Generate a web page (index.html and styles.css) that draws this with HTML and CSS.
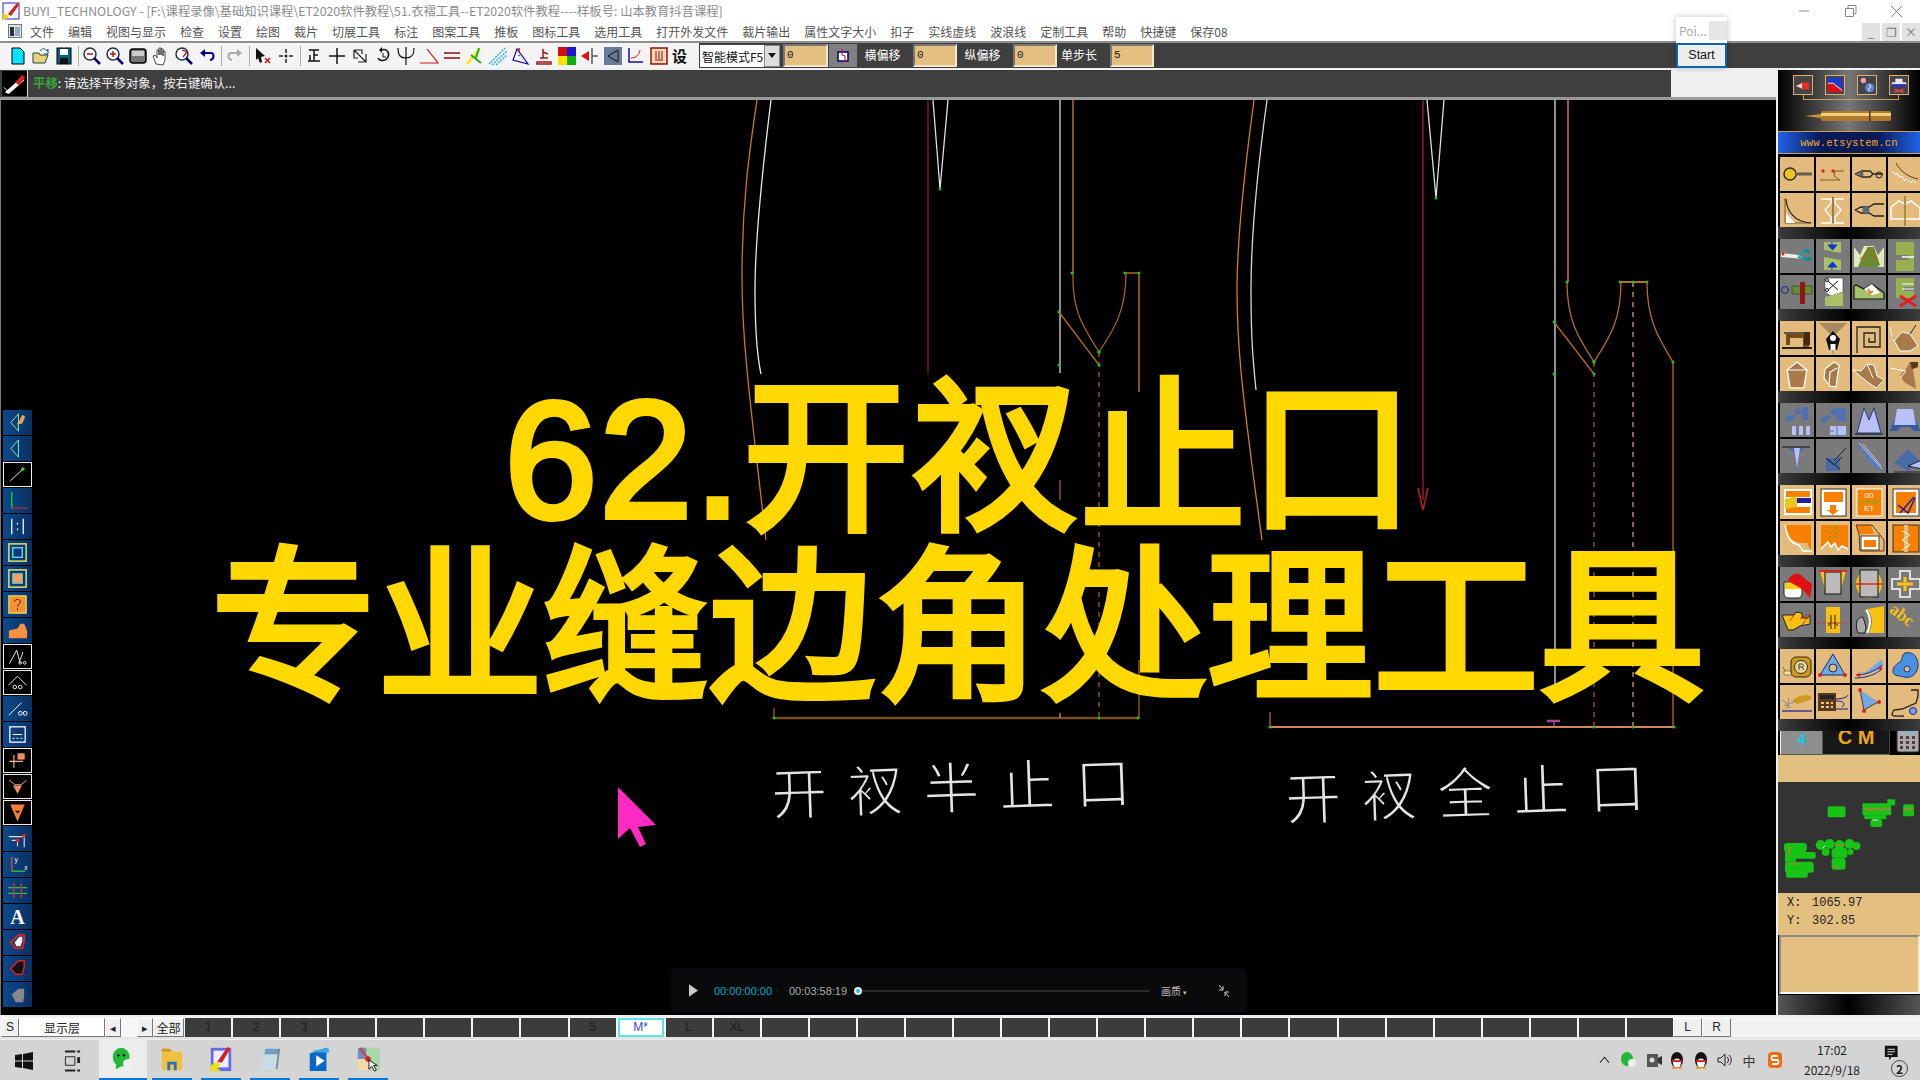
FILE: index.html
```html
<!DOCTYPE html>
<html lang="zh-CN">
<head>
    <meta charset="UTF-8">
    <title>BUYI_TECHNOLOGY - ET2020</title>
    <link rel="stylesheet" href="styles.css">
</head>
<body>
<div class="app">
    <!-- title bar -->
    <div class="titlebar">
        <svg class="app-logo" viewBox="0 0 18 18"><rect x="1" y="1" width="16" height="16" fill="#f4f4ff" stroke="#2a2ac0"/><path d="M6 12L15 1l2 2-8 11z" fill="#d02020"/><path d="M1 11l6 3-4 4H1z" fill="#f0d000"/></svg>
        <span class="title-text">BUYI_TECHNOLOGY - [F:\课程录像\基础知识课程\ET2020软件教程\51.衣褶工具--ET2020软件教程----样板号: 山本教育抖音课程]</span>
        <div class="win-btns">
            <svg viewBox="0 0 46 20"><path d="M18 10h10" stroke="#888"/></svg>
            <svg viewBox="0 0 46 20"><path d="M18.5 7.5h8v8h-8zM21 7.5v-3h8v8h-2.500" fill="none" stroke="#888"/></svg>
            <svg viewBox="0 0 46 20"><path d="M18 5l11 11M29 5L18 16" stroke="#888"/></svg>
        </div>
    </div>

    <!-- menu -->
    <div class="menubar">
        <svg class="menu-icon" viewBox="0 0 14 14"><rect x="0.5" y="0.5" width="13" height="13" fill="#dfe4e4" stroke="#777"/><rect x="2" y="3" width="4" height="9" fill="#234"/><rect x="7" y="3" width="5" height="9" fill="#9ab"/></svg>
        <span>文件</span><span>编辑</span><span>视图与显示</span><span>检查</span><span>设置</span><span>绘图</span><span>裁片</span><span>切展工具</span><span>标注</span><span>图案工具</span><span>推板</span><span>图标工具</span><span>选用工具</span><span>打开外发文件</span><span>裁片输出</span><span>属性文字大小</span><span>扣子</span><span>实线虚线</span><span>波浪线</span><span>定制工具</span><span>帮助</span><span>快捷键</span><span>保存08</span>
        <div class="mdi-btns">
            <div class="mdi-btn">_</div><div class="mdi-btn">❐</div><div class="mdi-btn">×</div>
        </div>
    </div>

    <!-- toolbar -->
    <div class="toolbar">
        <div class="tool-icons">
            <svg viewBox="0 0 20 20"><path d="M4 2h8l4 4v12H4z" fill="#00e5ff" stroke="#000"/></svg>
            <svg viewBox="0 0 20 20"><path d="M2 7h6l1 2h8l-3 8H2z" fill="#e8d27a" stroke="#245"/><path d="M9 5c2-3 5-3 7 0l1-2v5h-4" fill="none" stroke="#156"/></svg>
            <svg viewBox="0 0 20 20"><rect x="3" y="2" width="14" height="16" fill="#0a5f7a" stroke="#000"/><rect x="6" y="3" width="8" height="6" fill="#fff"/><rect x="6" y="12" width="8" height="6" fill="#111"/></svg>
            <i class="sep"></i>
            <svg viewBox="0 0 20 20"><circle cx="8" cy="8" r="6" fill="#fff" stroke="#234" stroke-width="1.5"/><path d="M5 8h6" stroke="#c01010" stroke-width="1.5"/><path d="M12 12l6 6" stroke="#007" stroke-width="2.5"/></svg>
            <svg viewBox="0 0 20 20"><circle cx="8" cy="8" r="6" fill="#fff" stroke="#234" stroke-width="1.5"/><path d="M5 8h6M8 5v6" stroke="#c01010" stroke-width="1.5"/><path d="M12 12l6 6" stroke="#007" stroke-width="2.5"/></svg>
            <svg viewBox="0 0 20 20"><rect x="2" y="3" width="16" height="14" rx="3" fill="#777" stroke="#000" stroke-width="1.5"/><rect x="4" y="5" width="12" height="5" fill="#ccc"/></svg>
            <svg viewBox="0 0 20 20"><path d="M5 18L2 10l2-1 2 3V4h2v5-7h2v7-6h2v7-5h2v9l-2 5z" fill="#fff" stroke="#222" stroke-width="0.8"/></svg>
            <svg viewBox="0 0 20 20"><circle cx="8" cy="8" r="6" fill="#fff" stroke="#234" stroke-width="1.5"/><path d="M8 4l5 2-4 5" fill="none" stroke="#c01010" stroke-width="1.3"/><path d="M12 12l6 6" stroke="#007" stroke-width="2.5"/></svg>
            <svg viewBox="0 0 20 20"><path d="M5 7h9c3 0 4 6-1 7" fill="none" stroke="#008" stroke-width="2"/><path d="M8 3L3 7l5 4z" fill="#008"/></svg>
            <i class="sep"></i>
            <svg viewBox="0 0 20 20"><path d="M15 7H6C3 7 2 13 7 14" fill="none" stroke="#aaa" stroke-width="2"/><path d="M12 3l5 4-5 4z" fill="#aaa"/></svg>
            <i class="sep"></i>
            <svg viewBox="0 0 20 20"><path d="M3 2l9 8-4 1 1 5-2 1-2-5-2 2z" fill="#111"/><path d="M12 12l5 5M17 12l-5 5" stroke="#d01010" stroke-width="1.5"/></svg>
            <svg viewBox="0 0 20 20"><path d="M10 3v4M10 13v4M3 10h4M13 10h4" stroke="#222" stroke-width="1.5"/><circle cx="10" cy="10" r="1.5" fill="#222"/></svg>
            <i class="sep"></i>
            <svg viewBox="0 0 20 20"><path d="M5 4h10M10 4v11M10 9h4M4 15h12M6 9v6" fill="none" stroke="#111" stroke-width="1.5"/></svg>
            <svg viewBox="0 0 20 20"><path d="M10 2v16M2 10h16" stroke="#111" stroke-width="1.5"/></svg>
            <svg viewBox="0 0 20 20"><path d="M4 4h8v4M8 16h8v-8M4 4l12 12M4 4v8h4" fill="none" stroke="#222" stroke-width="1.2"/></svg>
            <svg viewBox="0 0 20 20"><path d="M8 4c6-2 9 3 7 7s-8 5-10 1" fill="none" stroke="#111" stroke-width="1.5"/><path d="M9 1L6 4l3 3z" fill="#111"/><path d="M10 7v4h3" stroke="#111" fill="none"/></svg>
            <svg viewBox="0 0 20 20"><path d="M2 2c0 8 3 10 8 10s8-2 8-10M10 1v18" fill="none" stroke="#111" stroke-width="1.2"/></svg>
            <svg viewBox="0 0 20 20"><path d="M1 17h18L8 3" fill="none" stroke="#d01010" stroke-width="1.2"/></svg>
            <svg viewBox="0 0 20 20"><path d="M2 7h16M2 12h16" stroke="#8a1010" stroke-width="1.5"/></svg>
            <svg viewBox="0 0 20 20"><path d="M2 18L15 3" stroke="#ffe000" stroke-width="2.5"/><path d="M6 9l10 8M14 2l-3 10" stroke="#22aa22" stroke-width="2"/></svg>
            <svg viewBox="0 0 20 20"><path d="M1 18L17 2M4 19L19 5M8 19L19 9" stroke="#33b0e8" stroke-width="1.5" stroke-dasharray="2 1"/></svg>
            <svg viewBox="0 0 20 20"><path d="M6 3L2 14l15 4zM6 3l11 15" fill="none" stroke="#1010b0" stroke-width="1.2"/><path d="M8 2v4M8 9v1" stroke="#d01010" stroke-width="1.5"/></svg>
            <svg viewBox="0 0 20 20"><path d="M3 16h14v2H3zM9 3v9M9 6l5 2M6 12h8" fill="none" stroke="#9a1a1a" stroke-width="1.5"/></svg>
            <svg viewBox="0 0 20 20"><rect x="1" y="1" width="9" height="9" fill="#d01010"/><rect x="10" y="1" width="9" height="9" fill="#1818d0"/><rect x="1" y="10" width="9" height="9" fill="#ffe000"/><rect x="10" y="10" width="9" height="9" fill="#10b010"/></svg>
            <svg viewBox="0 0 20 20"><path d="M1 10l8-5v10z" fill="#e01010"/><path d="M12 2v16M12 10h6" stroke="#111"/></svg>
            <svg viewBox="0 0 20 20"><rect x="1" y="1" width="18" height="18" fill="#6a7a9a"/><path d="M15 4L5 10l10 6z" fill="none" stroke="#111"/></svg>
            <svg viewBox="0 0 20 20"><path d="M3 2v14h14" fill="none" stroke="#1010a0" stroke-width="1.5"/><path d="M5 12c5 0 8-3 9-8" stroke="#d01010" fill="none"/></svg>
            <svg viewBox="0 0 20 20"><rect x="2" y="2" width="16" height="16" fill="#f7d8b0" stroke="#8a1010" stroke-width="1.5"/><path d="M7 5v8M10 5v8M13 5v8M6 14h8" stroke="#8a1010"/></svg>
            <span class="tool-she">设</span>
        </div>
        <div class="tool-dark">
            <div class="combo"><span>智能模式F5</span><b class="combo-arrow"></b></div>
            <div class="field field-first">0</div>
            <div class="angle-btn"><svg viewBox="0 0 16 16"><rect x="3" y="4" width="10" height="9" fill="#fff" stroke="#006" stroke-width="1.5"/><path d="M7 1v6l3 1v6" fill="none" stroke="#d01010"/></svg></div>
            <label>横偏移</label>
            <div class="field">0</div>
            <label>纵偏移</label>
            <div class="field">0</div>
            <label class="label-step">单步长</label>
            <div class="field">5</div>
        </div>
        <div class="poi">
            <div class="poi-top"><span>Poi...</span><b></b></div>
            <div class="poi-start">Start</div>
        </div>
    </div>

    <!-- prompt -->
    <div class="statusbar">
        <svg class="status-icon" viewBox="0 0 26 26"><rect width="26" height="26" fill="#000"/><path d="M3 22L20 7l3 3-16 14z" fill="#fff"/><path d="M14 12l7-8 3 3-6 8z" fill="#e02020"/><path d="M2 17l5 5" stroke="#fff"/></svg>
        <div class="prompt"><b>平移</b>: 请选择平移对象，按右键确认...</div>
        <div class="status-rest"></div>
    </div>

    <div class="workspace">
        <!-- left tools -->
        <div class="sidebar">
            <div class="side-tool"><svg viewBox="0 0 30 24"><path d="M16 3L8 12l8 9V3z" fill="none" stroke="#8fe8b0"/><path d="M17 10l3-6 3 2-3 7-6 1z" fill="#f0a060"/></svg></div>
            <div class="side-tool"><svg viewBox="0 0 30 24"><path d="M16 3L8 12l8 9V3z" fill="none" stroke="#8fe8b0"/></svg></div>
            <div class="side-tool dark"><svg viewBox="0 0 30 24"><path d="M7 19L21 6" stroke="#fff"/><circle cx="21" cy="6" r="2" fill="#20e020"/></svg></div>
            <div class="side-tool"><svg viewBox="0 0 30 24"><path d="M9 3v17" stroke="#20c040" stroke-width="1.5"/><path d="M9 20h17" stroke="#a03030" stroke-width="1.5"/></svg></div>
            <div class="side-tool"><svg viewBox="0 0 30 24"><path d="M9 4v16M21 4v16M15 8v2M15 14v2" stroke="#fff" stroke-width="1.3"/></svg></div>
            <div class="side-tool"><svg viewBox="0 0 30 24"><rect x="6" y="3" width="18" height="18" fill="none" stroke="#e8e860" stroke-width="1.5"/><rect x="10" y="7" width="10" height="10" fill="none" stroke="#70c8f0" stroke-width="1.5"/></svg></div>
            <div class="side-tool"><svg viewBox="0 0 30 24"><rect x="6" y="3" width="18" height="18" fill="none" stroke="#e8e860" stroke-width="1.5"/><rect x="10" y="7" width="10" height="10" fill="#f0a060" stroke="#70c8f0"/></svg></div>
            <div class="side-tool"><svg viewBox="0 0 30 24"><rect x="6" y="3" width="18" height="18" fill="#f89030" stroke="#f0e050" stroke-width="1.3"/><path d="M12 9c0-3 6-3 6 0s-3 2-3 5M15 16v2" fill="none" stroke="#222"/></svg></div>
            <div class="side-tool"><svg viewBox="0 0 30 24"><path d="M6 20V12l9-2 3-5h4l3 7v8z" fill="#f89040"/></svg></div>
            <div class="side-tool dark"><svg viewBox="0 0 30 24"><path d="M6 20L14 5l4 14M18 16l3-9" fill="none" stroke="#fff"/><circle cx="18" cy="19" r="1.5" fill="none" stroke="#fff"/><circle cx="23" cy="19" r="1.5" fill="none" stroke="#fff"/></svg></div>
            <div class="side-tool dark"><svg viewBox="0 0 30 24"><path d="M5 15L15 5l10 10" fill="none" stroke="#fff"/><circle cx="12" cy="17" r="2" fill="none" stroke="#fff"/><circle cx="18" cy="17" r="2" fill="none" stroke="#fff"/></svg></div>
            <div class="side-tool"><svg viewBox="0 0 30 24"><path d="M6 19L19 6" stroke="#fff"/><circle cx="18" cy="17" r="2" fill="none" stroke="#fff"/><circle cx="23" cy="17" r="2" fill="none" stroke="#fff"/></svg></div>
            <div class="side-tool"><svg viewBox="0 0 30 24"><rect x="7" y="4" width="16" height="16" fill="none" stroke="#fff" stroke-width="1.3"/><path d="M10 12h10" stroke="#fff"/><path d="M10 16h10" stroke="#fff" stroke-dasharray="2 2"/></svg></div>
            <div class="side-tool dark"><svg viewBox="0 0 30 24"><path d="M6 13h15M11 6v14" stroke="#ffb090" stroke-width="1.3"/><rect x="15" y="4" width="8" height="7" fill="#f09060"/></svg></div>
            <div class="side-tool dark"><svg viewBox="0 0 30 24"><path d="M6 5l6 5h7l6-5" fill="none" stroke="#ffb090"/><path d="M10 11h10l-5 9z" fill="#f09060"/></svg></div>
            <div class="side-tool dark"><svg viewBox="0 0 30 24"><path d="M7 3h16l-8 19z" fill="#f88030"/><path d="M12 10h6l-3 3z" fill="#111"/></svg></div>
            <div class="side-tool"><svg viewBox="0 0 30 24"><path d="M6 10h16M9 14h6M22 10v11M15 14v6" stroke="#ddd" stroke-width="1.2"/><circle cx="22" cy="9" r="2" fill="#e02020"/><circle cx="15" cy="14" r="2" fill="#e02020"/></svg></div>
            <div class="side-tool"><svg viewBox="0 0 30 24"><path d="M9 4v15" stroke="#e04040" stroke-width="1.5"/><path d="M9 19h14" stroke="#30c040" stroke-width="1.5"/><text x="12" y="9" class="axis">y</text><text x="22" y="18" class="axis">x</text></svg></div>
            <div class="side-tool"><svg viewBox="0 0 30 24"><path d="M5 9h20M5 15h20" stroke="#30c040" stroke-width="1.5"/><path d="M11 4v16M19 4v16" stroke="#d03030" stroke-width="1.5"/></svg></div>
            <div class="side-tool"><span class="side-a">A</span></div>
            <div class="side-tool"><svg viewBox="0 0 30 24"><path d="M8 12l8-8h6v6l-2 8h-7z" fill="none" stroke="#e02020" stroke-width="2"/><path d="M12 12l5-6h3v5l-2 5h-4z" fill="#fff"/></svg></div>
            <div class="side-tool"><svg viewBox="0 0 30 24"><path d="M8 12l8-8h6v6l-2 8h-7z" fill="#111" stroke="#e02020" stroke-width="1.5"/></svg></div>
            <div class="side-tool"><svg viewBox="0 0 30 24"><path d="M9 12l7-6h6v7l-1 7h-8z" fill="#888"/></svg></div>
        </div>

        <!-- drawing area -->
        <div class="canvas">
            <svg class="drawing" viewBox="34 100 1742 915">
                <g fill="none" stroke-width="1.3">
                    <!-- half closed -->
                    <path d="M757 100C750 147 742 200 742 277C742 330 746 370 766 540" stroke="#c87820"/>
                    <path d="M771 100C762 173 755 240 755 290C755 340 758 360 761 374" stroke="#e8e8e8"/>
                    <path d="M928 100V373" stroke="#902020"/>
                    <path d="M933 100L940 189L948 100" stroke="#e0e0e0"/>
                    <path d="M1060 100V373" stroke="#b0b0b0" stroke-width="1.6"/>
                    <path d="M1073 100V273C1072 310 1082 325 1099 352C1115 328 1126 310 1126 273" stroke="#a8601c"/>
                    <path d="M1073 100V273M1139 273V392" stroke="#8a5018" stroke-width="2"/>
                    <path d="M1125 273H1139M1059 312L1099 365" stroke="#b06820"/>
                    <path d="M1099 352V716" stroke="#a06020" stroke-dasharray="5 5"/>
                    <path d="M1060 480V500M1139 660V718M774 708V718" stroke="#a06020"/>
                    <path d="M774 718H1138" stroke="#7a4a20" stroke-width="2.5"/>
                    <path d="M1060 713V718" stroke="#d880b0"/>
                    <!-- full closed -->
                    <path d="M1254 100C1245 167 1237 240 1237 290C1237 340 1240 380 1262 540" stroke="#d08020"/>
                    <path d="M1267 100C1257 173 1251 240 1251 290C1251 340 1253 360 1256 390" stroke="#d8d8d8"/>
                    <path d="M1423 100V500" stroke="#a82020"/>
                    <path d="M1418 488L1423 510L1428 488" stroke="#a82020" stroke-width="1.6"/>
                    <path d="M1427 100L1436 198L1444 100" stroke="#e0e0e0"/>
                    <path d="M1555 100V700" stroke="#c0c0c0" stroke-width="1.5"/>
                    <path d="M1568 100V282" stroke="#a05a1c" stroke-width="2"/>
                    <path d="M1567 282C1567 320 1578 337 1594 362C1610 337 1621 320 1621 282M1647 282C1647 320 1658 337 1673 362V727" stroke="#b86c20"/>
                    <path d="M1620 282H1647" stroke="#c07020" stroke-width="2"/>
                    <path d="M1554 322L1594 374" stroke="#b86c20"/>
                    <path d="M1594 362V727" stroke="#a06020" stroke-dasharray="5 5"/>
                    <path d="M1633 282V727" stroke="#e09860" stroke-dasharray="5 5"/>
                    <path d="M1270 712V727" stroke="#c06040"/>
                    <path d="M1270 727H1674" stroke="#d9835a" stroke-width="1.8"/>
                    <path d="M1554 720V727" stroke="#b050a0"/>
                    <path d="M1547 721H1560" stroke="#a04890" stroke-width="2.5"/>
                </g>
                <g fill="#18c818">
                    <circle cx="940" cy="189" r="1.5"/><circle cx="1072" cy="273" r="1.5"/><circle cx="1125" cy="273" r="1.5"/><circle cx="1139" cy="273" r="1.5"/><circle cx="1059" cy="312" r="1.5"/><circle cx="1099" cy="352" r="1.8"/><circle cx="1099" cy="365" r="1.5"/><circle cx="1059" cy="365" r="1.5"/>
                    <circle cx="1436" cy="198" r="1.5"/><circle cx="1567" cy="282" r="1.5"/><circle cx="1620" cy="282" r="1.5"/><circle cx="1633" cy="282" r="1.5"/><circle cx="1647" cy="282" r="1.5"/><circle cx="1554" cy="322" r="1.5"/><circle cx="1594" cy="362" r="1.8"/><circle cx="1594" cy="374" r="1.5"/><circle cx="1554" cy="374" r="1.5"/><circle cx="1673" cy="362" r="1.5"/>
                    <circle cx="774" cy="718" r="1.5"/><circle cx="1099" cy="718" r="1.5"/><circle cx="1138" cy="718" r="1.5"/><circle cx="1270" cy="727" r="1.5"/><circle cx="1594" cy="727" r="1.5"/><circle cx="1633" cy="727" r="1.5"/><circle cx="1674" cy="727" r="1.5"/>
                </g>
                <text class="cad-label" transform="translate(772 815) rotate(-2)">开衩半止口</text>
                <text class="cad-label" transform="translate(1286 820) rotate(-2)">开衩全止口</text>
                <polygon points="618,787 656,825 638,827 646,844 640,847 630,828 618,839" fill="#ff2bc2"/>
            </svg>

            <div class="big-title">
                <div class="big-line line-first">62.开衩止口</div>
                <div class="big-line line-second">专业缝边角处理工具</div>
            </div>

            <div class="player">
                <svg class="play-icon" viewBox="0 0 10 14"><path d="M0 0l10 7-10 7z" fill="#ccc"/></svg>
                <span class="time-now">00:00:00:00</span>
                <span class="time-all">00:03:58:19</span>
                <div class="track"><i></i></div>
                <span class="quality">画质 <small>▾</small></span>
                <svg class="shrink-icon" viewBox="0 0 14 14"><path d="M2 1l4 5M6 2v4H2M12 13L8 8M8 12V8h4" fill="none" stroke="#ccc"/></svg>
            </div>
        </div>

        <!-- right panel -->
        <div class="panel">
            <div class="panel-head">
                <div class="mini-row">
                    <div class="mini"><svg viewBox="0 0 20 20"><path d="M2 11l7-4h8v8H9z" fill="#e03020"/><path d="M2 11l7-3v6z" fill="#ddd"/></svg></div>
                    <div class="mini"><svg viewBox="0 0 20 20"><rect x="2" y="2" width="16" height="16" fill="#e01010"/><path d="M2 2h16v14L8 8H2z" fill="#1838d0"/><path d="M2 8h6l10 8" fill="none" stroke="#fff"/></svg></div>
                    <div class="mini"><svg viewBox="0 0 20 20"><circle cx="6" cy="5" r="3" fill="#f0a0a0"/><circle cx="13" cy="13" r="5" fill="#6080e0"/><path d="M12 10c3-1 3 3 0 4v3" stroke="#fff" fill="none"/></svg></div>
                    <div class="mini"><svg viewBox="0 0 20 20"><path d="M6 3h8v4h4v4H2V7h4z" fill="#e8e8ff"/><rect x="2" y="9" width="16" height="3" fill="#3030c0"/><path d="M5 15l10 3M15 15L5 18" stroke="#e04040" stroke-width="2"/></svg></div>
                </div>
                <div class="mini-wire"></div>
                <svg class="bullet" viewBox="0 0 86 12"><path d="M0 6l16-2v4z" fill="#d89030"/><rect x="16" y="1" width="70" height="10" rx="2" fill="#b07a28"/><rect x="16" y="3" width="70" height="3" fill="#f0d080"/><rect x="64" y="1" width="1.5" height="10" fill="#503010"/></svg>
            </div>
            <div class="site-band">www.etsystem.cn</div>

            <div class="tool-group">
                <div class="tile"><svg viewBox="0 0 34 34"><circle cx="10" cy="17" r="6" fill="#e8c820" stroke="#3a2a10" stroke-width="1.5"/><path d="M15 17h17" stroke="#6a5a50" stroke-width="3"/></svg></div>
                <div class="tile"><svg viewBox="0 0 34 34"><circle cx="7" cy="14" r="1.7" fill="#e02020"/><circle cx="17" cy="14" r="1.7" fill="#e02020"/><path d="M4 23H24L18 19 19 14H28" fill="none" stroke="#7a5a30"/></svg></div>
                <div class="tile"><svg viewBox="0 0 34 34"><path d="M3 17l7-3h8l3 3h10M3 17l7 3h8l3-3" fill="none" stroke="#222" stroke-width="1.3"/><circle cx="9" cy="17" r="2.5" fill="#666"/><circle cx="27" cy="18" r="3" fill="none" stroke="#222"/></svg></div>
                <div class="tile"><svg viewBox="0 0 34 34"><path d="M8 6c4 8 12 14 22 16" fill="none" stroke="#5a3a1a"/><path d="M4 14l4 4 1-2 3 5 2-2 3 5 2-2 4 4 2-3 4 4" fill="none" stroke="#fff"/></svg></div>
                <div class="tile"><svg viewBox="0 0 34 34"><path d="M5 5v25h26" fill="none" stroke="#7a5a30"/><path d="M6 30V20l9 10z" fill="#fff"/><path d="M6 6c1 12 8 23 25 24" fill="none" stroke="#222" stroke-width="1.2"/></svg></div>
                <div class="tile"><svg viewBox="0 0 34 34"><path d="M5 6h10v4l-6 7 6 7v6H5M28 6H19v4l6 7-6 7v6h9" fill="none" stroke="#fff" stroke-width="1.3"/><path d="M17 4v26" stroke="#5a3a1a"/></svg></div>
                <div class="tile"><svg viewBox="0 0 34 34"><path d="M3 17l6-3h8l5-3h10M3 17l6 3h8l5 3h10" fill="none" stroke="#222" stroke-width="1.3"/><circle cx="14" cy="17" r="3.5" fill="#5a6a7a"/></svg></div>
                <div class="tile"><svg viewBox="0 0 34 34"><path d="M3 26V14l8-6 6 3 6-3 9 7v11z" fill="none" stroke="#fff" stroke-width="1.5"/><path d="M17 3v30" stroke="#d0c020" stroke-width="1.5" stroke-dasharray="2 1"/><path d="M17 3v30" stroke="#222" stroke-width="0.6"/></svg></div>
            </div>
            <div class="tool-group">
                <div class="tile gray"><svg viewBox="0 0 34 34"><path d="M1 14l18 2 6 4-24-2z" fill="#eee"/><circle cx="3" cy="15" r="1.5" fill="#e02020"/><path d="M18 16l8-4M18 18l8 2" stroke="#20a0a0" stroke-width="2"/><ellipse cx="27" cy="12" rx="3" ry="2" fill="#1a8a9a"/><ellipse cx="28" cy="20" rx="4" ry="2" fill="#1a8a9a"/></svg></div>
                <div class="tile gray"><svg viewBox="0 0 34 34"><path d="M8 3h17v11l-17-3zM8 18l17 3v10H8z" fill="#a8c068"/><path d="M16 3v5M12 6h9l-4.500 5zM12 28h9l-4.500-5zM16 27v4" fill="#1030d0" stroke="#1030d0"/></svg></div>
                <div class="tile gray"><svg viewBox="0 0 34 34"><path d="M2 28V8l6 8 4-9h10l4 9 6-8v20z" fill="#dfe8c0"/><path d="M6 28l4-10 6-10 6 0 6 18-3 2z" fill="#6a8a30"/><path d="M8 20l6-4M26 20l-6-4M16 8v5" stroke="#e04020"/></svg></div>
                <div class="tile gray"><svg viewBox="0 0 34 34"><path d="M8 3h18v29H8V21h13v-5H8z" fill="#98b050"/><path d="M14 18h12" stroke="#fff" stroke-width="1.5"/></svg></div>
                <div class="tile gray"><svg viewBox="0 0 34 34"><circle cx="5" cy="15" r="3.5" fill="none" stroke="#1818a0"/><path d="M12 11h20v8H12z" fill="#6a8a30" stroke="#222" stroke-width="0.5"/><path d="M20 7h5v22h-5z" fill="#8a1818"/></svg></div>
                <div class="tile gray"><svg viewBox="0 0 34 34"><path d="M9 3h18v14l-12 4-6-4z" fill="#fff" stroke="#222" stroke-width="0.5"/><path d="M12 6l10 9M22 6l-10 9" stroke="#111"/><circle cx="11" cy="5" r="1.5" fill="none" stroke="#111"/><circle cx="11" cy="15" r="1.5" fill="none" stroke="#111"/><path d="M9 22l18-5v14H9z" fill="#a8c068"/></svg></div>
                <div class="tile gray"><svg viewBox="0 0 34 34"><path d="M2 11v13h30v-6L20 9 12 14 4 10z" fill="#a8c068" stroke="#111" stroke-width="1.2"/><path d="M12 14l8-5 8 9-8 2z" fill="#fff"/><path d="M16 14l2 4 3-2" stroke="#e08030" stroke-width="2" fill="none"/></svg></div>
                <div class="tile gray"><svg viewBox="0 0 34 34"><path d="M8 3h18v9H16v4h10v7H8z" fill="#98b050"/><path d="M14 9h12M14 14h12" stroke="#fff"/><path d="M12 21l16 10M28 21L12 31" stroke="#e02020" stroke-width="3"/></svg></div>
            </div>
            <div class="tool-group">
                <div class="tile"><svg viewBox="0 0 34 34"><path d="M3 13h26v14h-6V17H10v7H6v-11z" fill="#7a4a1a"/><rect x="2" y="26" width="30" height="2" fill="#222"/><rect x="24" y="11" width="6" height="13" fill="#4a2a0a"/><path d="M4 12h24" stroke="#333" stroke-width="1.5"/></svg></div>
                <div class="tile"><svg viewBox="0 0 34 34"><path d="M3 2h28L20 13h-6z" fill="#a88a60"/><path d="M17 10l7 8-3 11h-8l-3-11z" fill="#111"/><circle cx="17" cy="17" r="3" fill="#fff"/><rect x="14.5" y="23" width="5" height="6" fill="#fff"/><path d="M17 29v4" stroke="#888"/></svg></div>
                <div class="tile"><svg viewBox="0 0 34 34"><path d="M5 32V6h23v20H12V12h11v9h-6v-4" fill="none" stroke="#222" stroke-width="1.3"/></svg></div>
                <div class="tile"><svg viewBox="0 0 34 34"><path d="M2 8l4 12 8-9 8 2 8 12-8 5H12z" fill="#a87a4a"/><path d="M1 6c2 0 2 8 5 14l8-9 8 2 8 12-8 5H12L6 20" fill="none" stroke="#fff"/><path d="M22 13l6-9" stroke="#222"/></svg></div>
                <div class="tile"><svg viewBox="0 0 34 34"><path d="M8 13L17 5l9 8-3 17H11z" fill="#a87a4a"/><path d="M7 13L17 5l10 8-3 18H10zM7 13h20" fill="none" stroke="#fff" stroke-width="1.2"/></svg></div>
                <div class="tile"><svg viewBox="0 0 34 34"><path d="M9 12l9-7 5 3-3 22-6-1-6-8z" fill="#a87a4a"/><path d="M9 12l9-7 5 3-3 22-6-1-6-8zM21 11l-7 4-1 13" fill="none" stroke="#fff" stroke-width="1.2"/></svg></div>
                <div class="tile"><svg viewBox="0 0 34 34"><path d="M1 13l8 1 6-7 7 1 3 11 7 4-8 8-11-8z" fill="#a87a4a" stroke="#fff"/><path d="M15 7l6 14" stroke="#fff"/></svg></div>
                <div class="tile"><svg viewBox="0 0 34 34"><path d="M18 12l4-7h8v5l-5 2 3 20-12-7-4-7z" fill="#a87a4a"/><path d="M22 5h8v5l-6 2" fill="#5a3a1a"/><path d="M2 11l16 3-6 7" fill="none" stroke="#fff"/></svg></div>
            </div>
            <div class="tool-group">
                <div class="tile gray"><svg viewBox="0 0 34 34"><g fill="#5070b0"><path d="M4 16l8-5 3 4-8 5zM14 7l5-2 3 5-6 2z"/><rect x="22" y="4" width="6" height="13"/></g><g fill="#b8c0f8"><rect x="12" y="23" width="4" height="9"/><rect x="19" y="23" width="4" height="9"/><rect x="26" y="23" width="4" height="9"/></g></svg></div>
                <div class="tile gray"><svg viewBox="0 0 34 34"><g fill="#5070b0"><path d="M4 16l8-5 3 4-8 5zM14 7l6-2 3 5-7 3z"/><rect x="20" y="5" width="10" height="13"/></g><path d="M14 23h16v9H14z" fill="#b8c0f8"/><path d="M21 23v9M14 28h4" stroke="#5070b0"/></svg></div>
                <div class="tile gray"><svg viewBox="0 0 34 34"><path d="M5 30L12 5l5 12 5-12 7 25z" fill="#b8c0f8" stroke="#2a3a7a"/><path d="M3 31h28" stroke="#111"/></svg></div>
                <div class="tile gray"><svg viewBox="0 0 34 34"><path d="M2 28L9 10l2 2h12l2-2 7 18h-6l-4-4h-9l-4 4z" fill="#3a5aa0"/><path d="M9 6h16l3 16H6z" fill="#b8c0f8"/></svg></div>
                <div class="tile gray"><svg viewBox="0 0 34 34"><path d="M2 8h28" stroke="#111"/><path d="M8 9h16l-6 6-1 17-2-17z" fill="#4a6aa8"/><path d="M14 9l3 20 3-20z" fill="#b8c0f8"/></svg></div>
                <div class="tile gray"><svg viewBox="0 0 34 34"><path d="M10 19h14v13H10z" fill="#4a6aa8"/><path d="M10 19l14 11M30 9L18 22M10 19l8 7 8-8" fill="none" stroke="#222"/></svg></div>
                <div class="tile gray"><svg viewBox="0 0 34 34"><path d="M4 3l24 22 4 8-14-8z" fill="#5a7ab8"/><path d="M7 4l23 26M11 5l18 22" stroke="#c0c8f0"/></svg></div>
                <div class="tile gray"><svg viewBox="0 0 34 34"><path d="M6 24L20 10l12 12-12 10z" fill="#4a6aa8"/><path d="M6 33h28M20 27l14-6v9z" fill="#b8c0f8" stroke="#222"/></svg></div>
            </div>
            <div class="tool-group">
                <div class="tile"><svg viewBox="0 0 34 34"><rect x="4" y="4" width="28" height="26" fill="#fff"/><rect x="6" y="6" width="24" height="22" fill="#f88000"/><rect x="6" y="12" width="24" height="10" fill="#fff"/><path d="M5 14l12-3v11l-12 2z" fill="#e8c820"/><path d="M17 13h14v5H17z" fill="#20209a"/></svg></div>
                <div class="tile"><svg viewBox="0 0 34 34"><rect x="5" y="4" width="25" height="27" fill="#fff" stroke="#333"/><rect x="8" y="7" width="19" height="10" fill="#f88000"/><path d="M14 20h6v5h3l-6 5-6-5h3z" fill="#f88000"/></svg></div>
                <div class="tile"><svg viewBox="0 0 34 34"><rect x="5" y="4" width="25" height="27" fill="#f88000" stroke="#fff"/><text x="17" y="13" class="et-text">00</text><path d="M7 17h21" stroke="#80b020" stroke-width="1.5"/><text x="17" y="26" class="et-text">ET</text></svg></div>
                <div class="tile"><svg viewBox="0 0 34 34"><rect x="5" y="4" width="26" height="27" fill="#fff" stroke="#333"/><rect x="8" y="7" width="20" height="21" fill="#f88000"/><path d="M10 20l10 8 7-15M12 28l14-16" fill="none" stroke="#20209a" stroke-width="1.5"/></svg></div>
                <div class="tile"><svg viewBox="0 0 34 34"><path d="M6 4c2 10 4 16 14 18h7l4 8V4z" fill="#f88000"/><path d="M5 4c2 12 5 18 14 20l4 6h9" fill="none" stroke="#fff" stroke-width="1.5"/></svg></div>
                <div class="tile"><svg viewBox="0 0 34 34"><path d="M5 4h27v23l-6-3-4 4-3-7-4 4-3-5-7 7z" fill="#f88000"/><path d="M14 5v14M20 5v14" stroke="#80a020" stroke-dasharray="3 2" stroke-width="1.5"/><path d="M5 28l7-7 3 5 4-4 3 7 4-4 6 3" fill="none" stroke="#fff" stroke-width="1.5"/></svg></div>
                <div class="tile"><svg viewBox="0 0 34 34"><path d="M4 4h15l3 9H7z" fill="#f88000"/><path d="M7 13l-3-9h16l12 15v11H8z" fill="none" stroke="#5a3a1a"/><rect x="9" y="15" width="18" height="14" fill="#fff" stroke="#5a3a1a"/><rect x="12" y="19" width="12" height="7" fill="#f88000"/></svg></div>
                <div class="tile"><svg viewBox="0 0 34 34"><rect x="5" y="4" width="26" height="27" fill="#f88000" stroke="#333"/><path d="M16 4h4v27h-4z" fill="#e3bc7d"/><path d="M14 10l8 4-8 5 8 5-8 5" fill="none" stroke="#fff"/></svg></div>
            </div>
            <div class="tool-group">
                <div class="tile gray"><svg viewBox="0 0 34 34"><path d="M4 15h18v12c0 2-2 4-4 4H8c-2 0-4-2-4-4z" fill="#fff" stroke="#222"/><path d="M5 16h16v6H5z" fill="#f8d010"/><path d="M8 14c2-8 12-10 16-3l8 6-2 14-8-9z" fill="#e01010"/></svg></div>
                <div class="tile gray"><svg viewBox="0 0 34 34"><path d="M4 4l6 22h14l6-22z" fill="#f8c010"/><rect x="9" y="5" width="16" height="22" fill="#bbb" stroke="#111"/><path d="M3 4h28" stroke="#e01010" stroke-width="1.5"/></svg></div>
                <div class="tile gray"><svg viewBox="0 0 34 34"><ellipse cx="17" cy="17" rx="13" ry="14" fill="#f8c010"/><rect x="8" y="3" width="18" height="27" fill="#bbb" stroke="#111"/><path d="M4 17h27" stroke="#e01010" stroke-width="1.3"/></svg></div>
                <div class="tile gray"><svg viewBox="0 0 34 34"><path d="M12 4h10v8h10v10H22v8H12V22H4V12h8z" fill="none" stroke="#fff" stroke-width="1.5"/><path d="M17 10v14M9 17h16" stroke="#f8c010" stroke-width="3"/></svg></div>
                <div class="tile gray"><svg viewBox="0 0 34 34"><path d="M2 12h12l2-3 6 1v5h6l2-3v9l-10 2-7 4H8z" fill="#f8c010" stroke="#222"/><path d="M20 16l10-6M22 22l7-9M10 18l4-6" stroke="#d03030"/></svg></div>
                <div class="tile gray"><svg viewBox="0 0 34 34"><rect x="10" y="4" width="14" height="26" fill="#f8c010"/><path d="M1 20h32" stroke="#d03030" stroke-dasharray="3 2"/><path d="M15 12v14M19 12v14M15 19l-3 4M19 19l3 4" stroke="#222"/></svg></div>
                <div class="tile gray"><svg viewBox="0 0 34 34"><path d="M15 6c12-2 17-3 17-3v27H17c4-8 4-18-2-24z" fill="#f8c010"/><path d="M14 7c5 6 5 16 1 23" stroke="#fff" stroke-width="2" fill="none"/><path d="M5 18c1-3 4-4 6-4l3 10-1 6H6c-2-4-2-8-1-12z" fill="#aaa" stroke="#222"/></svg></div>
                <div class="tile gray"><span class="abc">abc</span></div>
            </div>
            <div class="tool-group">
                <div class="tile"><svg viewBox="0 0 34 34"><path d="M3 18l3 6h12" fill="none" stroke="#8a6a20"/><path d="M4 22h16v4H4z" fill="#f0e0a0" stroke="#333" stroke-width="0.5"/><rect x="11" y="8" width="20" height="20" rx="5" fill="#c89820" stroke="#3a2a10"/><circle cx="21" cy="18" r="6.5" fill="#e8d8a0" stroke="#3a2a10"/><path d="M19 21v-6h3c2 0 2 3 0 3h-3M22 18l2 3" fill="none" stroke="#222" stroke-width="0.8"/></svg></div>
                <div class="tile"><svg viewBox="0 0 34 34"><path d="M4 26L17 5l12 21z" fill="#70a8e8" stroke="#1a2a5a"/><circle cx="17" cy="19" r="4" fill="#e3bc7d" stroke="#1a2a5a"/><circle cx="4" cy="26" r="2" fill="#e02020"/><circle cx="29" cy="26" r="2" fill="#e02020"/></svg></div>
                <div class="tile"><svg viewBox="0 0 34 34"><path d="M5 24l9-1 16-13 1 9-16 6z" fill="#70a8e8"/><path d="M4 26c9 0 18-3 26-10M3 29c10 0 20-3 27-9" fill="none" stroke="#1a2a8a"/><circle cx="7" cy="26" r="1.8" fill="#e02020"/><circle cx="28" cy="19" r="1.8" fill="#e02020"/></svg></div>
                <div class="tile"><svg viewBox="0 0 34 34"><path d="M17 4c8-2 13 4 13 12s-6 14-14 12-11-1-11-6 4-7 7-9 1-7 5-9z" fill="#4a90e0" stroke="#1a3a7a"/><circle cx="19" cy="20" r="3" fill="#e3bc7d" stroke="#1a3a7a"/></svg></div>
                <div class="tile"><svg viewBox="0 0 34 34"><path d="M12 15l8-4c4-1 10-1 12 1l-2 3-13 4z" fill="#d09820"/><path d="M4 21l12-5M3 15l8 8M9 13l-2 11" stroke="#888"/><path d="M2 26h30" stroke="#1a1aa0" stroke-width="1.2"/></svg></div>
                <div class="tile"><svg viewBox="0 0 34 34"><rect x="2" y="8" width="18" height="18" fill="#5a3a1a"/><rect x="4" y="10" width="14" height="4" fill="#222"/><path d="M5 17h3v2H5zM10 17h3v2h-3zM15 17h2v2h-2zM5 21h3v2H5zM10 21h3v2h-3zM15 21h2v2h-2z" fill="#e8c880"/><path d="M20 14c6 0 12-2 12-4M20 16c8 0 10 3 6 6M20 24h12" fill="none" stroke="#1a1aa0"/></svg></div>
                <div class="tile"><svg viewBox="0 0 34 34"><path d="M8 5l4 20 14-8z" fill="#70a8e8"/><path d="M8 5l4 20 14-8" fill="none" stroke="#5a3a1a"/><circle cx="8" cy="5" r="2" fill="#e02020"/><circle cx="12" cy="26" r="2" fill="#e02020"/><circle cx="27" cy="17" r="2" fill="#e02020"/></svg></div>
                <div class="tile"><svg viewBox="0 0 34 34"><path d="M23 5h7v6l-2 7-14 6-8 1-2 4c0 3 4 2 12 2" fill="none" stroke="#222" stroke-width="1.3"/><circle cx="25" cy="26" r="3.5" fill="#70a8e8" stroke="#1a1aa0"/></svg></div>
            </div>

            <div class="unit-row">
                <div class="unit-num">4</div>
                <div class="unit-cm">C M</div>
                <svg class="unit-calc" viewBox="0 0 24 30"><rect x="1" y="1" width="22" height="28" rx="2" fill="#aaa" stroke="#333"/><rect x="3" y="3" width="18" height="7" fill="#8ab0d8"/><path d="M4 13h3v3H4zM10 13h3v3h-3zM16 13h3v3h-3zM4 18h3v3H4zM10 18h3v3h-3zM16 18h3v3h-3zM4 23h3v3H4zM10 23h3v3h-3zM16 23h3v3h-3z" fill="#5a3a3a"/></svg>
            </div>
            <div class="tan-strip"></div>
            <svg class="thumb" viewBox="0 0 143 111">
                <g fill="#16c416">
                    <rect x="50" y="24" width="18" height="11" rx="2"/>
                    <rect x="85" y="21" width="29" height="12" rx="1"/><rect x="110" y="17" width="8" height="6"/><rect x="87" y="33" width="22" height="4"/><rect x="93" y="37" width="12" height="8" rx="2"/>
                    <rect x="126" y="22" width="11" height="12" rx="2"/>
                    <rect x="6" y="61" width="23" height="9" rx="3"/><rect x="7" y="70" width="11" height="10"/><rect x="14" y="70" width="24" height="7" rx="2"/><rect x="7" y="80" width="29" height="11" rx="3"/><rect x="8" y="90" width="22" height="6" rx="2"/>
                    <circle cx="43" cy="63" r="5"/><circle cx="52" cy="62" r="5"/><circle cx="48" cy="70" r="4"/><circle cx="62" cy="63" r="5"/><circle cx="72" cy="62" r="5"/><circle cx="79" cy="64" r="4"/><circle cx="73" cy="70" r="3"/>
                    <rect x="54" y="66" width="16" height="10" rx="3"/><rect x="54" y="76" width="14" height="12" rx="3"/>
                </g>
                <path d="M87 27h26M127 27h9" stroke="#b08030" stroke-width="3" stroke-dasharray="2 1"/>
                <path d="M11 64v10M12 82h8M58 63h8M56 85h5" stroke="#b08030" stroke-width="1.5"/>
                <path d="M95 38h6M45 66l3 -2" stroke="#eee"/>
            </svg>
            <div class="coords">
                <div><span>X:</span>1065.97</div>
                <div><span>Y:</span>302.85</div>
            </div>
            <div class="tan-box"></div>
            <div class="panel-foot"></div>
        </div>
    </div>

    <!-- layers -->
    <div class="layerbar">
        <div class="lbtn lbtn-s">S</div>
        <div class="lbtn lbtn-layer">显示层</div>
        <div class="lbtn lbtn-arrow">◂</div>
        <div class="lbtn-slider"></div>
        <div class="lbtn lbtn-arrow">▸</div>
        <div class="lbtn lbtn-all">全部</div>
        <div class="cells">
            <div class="cell">1</div><div class="cell">2</div><div class="cell">3</div><div class="cell"></div><div class="cell"></div><div class="cell"></div><div class="cell"></div><div class="cell"></div><div class="cell">S</div><div class="cell on">M*</div><div class="cell">L</div><div class="cell">XL</div><div class="cell"></div><div class="cell"></div><div class="cell"></div><div class="cell"></div><div class="cell"></div><div class="cell"></div><div class="cell"></div><div class="cell"></div><div class="cell"></div><div class="cell"></div><div class="cell"></div><div class="cell"></div><div class="cell"></div><div class="cell"></div><div class="cell"></div><div class="cell"></div><div class="cell"></div><div class="cell"></div><div class="cell"></div>
        </div>
        <div class="lbtn lbtn-lr">L</div>
        <div class="lbtn lbtn-lr">R</div>
    </div>

    <!-- windows taskbar -->
    <div class="taskbar">
        <svg class="win-logo" viewBox="0 0 18 18"><path d="M0 3l7-1v6.5H0zM8 2l10-2v8.5H8zM0 9.5h7V16l-7-1zM8 9.5h10V18L8 16z" fill="#111"/></svg>
        <svg class="task-view" viewBox="0 0 18 24"><path d="M1 1h11v2H1zM1 21h11v2H1zM14 1h3v2h-3zM14 8h3v6h-3zM14 21h3v2h-3z" fill="#222"/><path d="M1.5 7.5h10v9h-10z" fill="none" stroke="#222"/></svg>
        <div class="task-item active"><svg viewBox="0 0 28 28"><ellipse cx="12" cy="12" rx="9" ry="10" fill="#22b838"/><path d="M7 19l-1 6 6-3z" fill="#22b838"/><ellipse cx="20" cy="19" rx="6" ry="5" fill="#eee"/><circle cx="9" cy="10" r="1.3" fill="#111"/><circle cx="15" cy="10" r="1.3" fill="#111"/></svg></div>
        <div class="task-item"><svg viewBox="0 0 28 28"><path d="M3 3h9l2 3h11v20H3z" fill="#f0c040"/><path d="M3 3h9l2 3H3z" fill="#d09a20"/><path d="M9 26v-9h10v9h-3v-6h-4v6z" fill="#2a70c0"/></svg></div>
        <div class="task-item"><svg viewBox="0 0 28 28"><rect x="3" y="2" width="22" height="25" fill="#6a6ae8"/><rect x="6" y="5" width="16" height="18" fill="#eef"/><path d="M10 17L21 1l3 2-9 15z" fill="#d02020"/><path d="M3 21l6-4 4 3-3 4 4 3H3z" fill="#f0e000"/></svg></div>
        <div class="task-item"><svg viewBox="0 0 28 28"><path d="M9 3h15l-3 22H4z" fill="#c8dce8"/><path d="M9 3h15l-1 6H8z" fill="#6aa0c8"/><path d="M21 25l3-22" stroke="#888" stroke-width="2"/></svg></div>
        <div class="task-item"><svg viewBox="0 0 28 28"><path d="M4 8l18-6v25H4z" fill="#0a68c8"/><path d="M8 5l16-3 1 5H8z" fill="#38a8e8"/><path d="M11 10l9 6-9 6z" fill="#fff"/></svg></div>
        <div class="task-item"><svg viewBox="0 0 28 28"><rect x="3" y="2" width="24" height="24" rx="3" fill="#a8d8a8"/><path d="M3 5c0-2 1-3 3-3h6v12H3z" fill="#7888c0"/><path d="M3 14h12v12H6c-2 0-3-1-3-3z" fill="#f4d8a8"/><path d="M5 2l10 12" stroke="#d04040" stroke-width="2"/><circle cx="14" cy="14" r="3" fill="#d82020"/><path d="M15 15v10l3-3 3 5 2-1-3-5h4z" fill="#fff" stroke="#111"/></svg></div>

        <div class="tray">
            <svg class="tray-up" viewBox="0 0 12 8"><path d="M1 7l5-6 5 6" fill="none" stroke="#222" stroke-width="1.2"/></svg>
            <svg class="tray-icon" viewBox="0 0 18 18"><ellipse cx="7" cy="8" rx="6" ry="7" fill="#22b838"/><ellipse cx="12" cy="12" rx="4" ry="4" fill="#eee"/></svg>
            <svg class="tray-icon" viewBox="0 0 18 18"><rect x="3" y="3" width="11" height="13" fill="#555"/><path d="M14 7l4-2v9l-4-2z" fill="#333"/><circle cx="8" cy="9" r="2.5" fill="#ddd"/></svg>
            <svg class="tray-icon" viewBox="0 0 18 18"><ellipse cx="9" cy="9" rx="6" ry="8" fill="#111"/><ellipse cx="9" cy="12" rx="4" ry="4.5" fill="#fff"/><path d="M4 9h10v2H4z" fill="#d82020"/><path d="M4 17h4M10 17h4" stroke="#e8a020" stroke-width="2"/></svg>
            <svg class="tray-icon" viewBox="0 0 18 18"><ellipse cx="9" cy="9" rx="6" ry="8" fill="#111"/><ellipse cx="9" cy="12" rx="4" ry="4.5" fill="#fff"/><path d="M4 9h10v2H4z" fill="#d82020"/><path d="M4 17h4M10 17h4" stroke="#e8a020" stroke-width="2"/></svg>
            <svg class="tray-icon" viewBox="0 0 18 18"><path d="M2 7h3l4-4v12l-4-4H2z" fill="none" stroke="#222"/><path d="M11 6c2 2 2 4 0 6M13 4c3 3 3 7 0 10" fill="none" stroke="#222"/></svg>
            <span class="tray-ime">中</span>
            <svg class="tray-icon tray-s" viewBox="0 0 18 18"><rect x="2" y="1" width="14" height="16" rx="4" fill="#f06a10"/><path d="M12 5H7C5 5 5 9 7 9h4c2 0 2 4 0 4H6" fill="none" stroke="#fff" stroke-width="1.8"/></svg>
            <div class="clock"><div>17:02</div><div>2022/9/18</div></div>
            <div class="notify">
                <svg viewBox="0 0 20 20"><path d="M1 1h15v13H9l-3 4v-4H1z" fill="#111"/><path d="M4 5h9M4 8h9M4 11h6" stroke="#fff"/></svg>
                <span>2</span>
            </div>
        </div>
    </div>
</div>
</body>
</html>
```

FILE: styles.css
```css
* {
    margin: 0;
    padding: 0;
    box-sizing: border-box;
}

body {
    width: 1920px;
    height: 1080px;
    overflow: hidden;
    background: #000;
    font-family: "Noto Sans CJK SC", "Noto Sans", sans-serif;
    font-size: 12px;
}

.app {
    width: 1920px;
    height: 1080px;
    display: flex;
    flex-direction: column;
    position: relative;
}

/* title bar */
.titlebar {
    height: 21px;
    background: #fff;
    display: flex;
    align-items: center;
    padding-left: 2px;
    color: #8c8c8c;
}

.app-logo {
    width: 18px;
    height: 18px;
    margin-right: 3px;
}

.title-text {
    font-size: 12.3px;
    white-space: nowrap;
}

.win-btns {
    margin-left: auto;
    display: flex;
    margin-right: 1px;
}

.win-btns svg {
    width: 46px;
    height: 20px;
    display: block;
}

/* menu */
.menubar {
    height: 22px;
    background: #fff;
    display: flex;
    align-items: center;
    gap: 14px;
    padding-left: 8px;
    color: #555;
    border-bottom: 2px solid #8e8e8e;
}

.menubar span {
    white-space: nowrap;
}

.menu-icon {
    width: 14px;
    height: 14px;
    margin-right: -6px;
}

.mdi-btns {
    margin-left: auto;
    display: flex;
    gap: 2px;
    align-self: flex-end;
}

.mdi-btn {
    width: 18px;
    height: 18px;
    background: #e2e2e2;
    color: #777;
    text-align: center;
    font-size: 12px;
    line-height: 18px;
}

/* toolbar */
.toolbar {
    height: 25px;
    background: #3f3f3f;
    display: flex;
    position: relative;
}

.tool-icons {
    width: 699px;
    background: #f4f4f4;
    display: flex;
    align-items: center;
    padding-left: 8px;
    flex-shrink: 0;
}

.tool-icons svg {
    width: 20px;
    height: 20px;
    margin-right: 3px;
    flex-shrink: 0;
}

.sep {
    width: 1px;
    height: 20px;
    background: #aaa;
    margin: 0 3px 0 1px;
    flex-shrink: 0;
}

.tool-she {
    font-size: 15px;
    font-weight: bold;
    color: #111;
}

.tool-dark {
    flex: 1;
    display: flex;
    align-items: stretch;
    color: #fff;
}

.combo {
    width: 80px;
    margin: 2px 3px 1px 1px;
    background: #fff;
    color: #111;
    display: flex;
    align-items: center;
    white-space: nowrap;
    overflow: hidden;
    padding-left: 2px;
    font-size: 12px;
}

.combo span {
    flex: 1;
    overflow: hidden;
}

.combo-arrow {
    width: 16px;
    height: 100%;
    background: #ddd;
    border: 1px solid #888;
    position: relative;
    flex-shrink: 0;
}

.combo-arrow:after {
    content: '';
    position: absolute;
    left: 3px;
    top: 7px;
    border: 4px solid transparent;
    border-top: 5px solid #111;
}

.field {
    width: 44px;
    margin: 1px 0;
    background: #e3bf80;
    border: 2px solid;
    border-color: #777 #f4e8d0 #f4e8d0 #777;
    color: #222;
    font-family: "Liberation Mono", monospace;
    font-size: 11px;
    line-height: 18px;
    padding-left: 2px;
}

.field-first {
    width: 45px;
}

.angle-btn {
    width: 28px;
    margin: 1px 0 1px 1px;
    background: #808080;
    display: flex;
    align-items: center;
    justify-content: center;
}

.angle-btn svg {
    width: 16px;
    height: 16px;
}

.tool-dark label {
    width: 47px;
    text-align: center;
    margin-left: 2px;
    margin-right: 7px;
    line-height: 23px;
}

.tool-dark label.label-step {
    width: 44px;
    margin-left: 0;
    margin-right: 9px;
}

/* floating recorder */
.poi {
    position: absolute;
    left: 1676px;
    top: -26px;
    width: 51px;
    box-shadow: 0 0 6px rgba(0, 0, 0, 0.25);
    background: #fff;
}

.poi-top {
    height: 26px;
    display: flex;
    align-items: center;
    color: #aaa;
    padding-left: 3px;
    font-size: 12px;
}

.poi-top b {
    width: 18px;
    height: 19px;
    background: #e6e6e6;
    margin-left: 2px;
}

.poi-start {
    height: 25px;
    background: #eee;
    border: 2px solid #0a64b4;
    color: #111;
    text-align: center;
    line-height: 20px;
    font-family: "Liberation Sans", sans-serif;
    font-size: 12.5px;
}

/* prompt */
.statusbar {
    height: 32px;
    background: #3f3f3f;
    display: flex;
    align-items: stretch;
    border-top: 2px solid #f0f0f0;
    border-bottom: 3px solid #9a9a9a;
}

.status-icon {
    width: 26px;
    height: 27px;
    margin-left: 2px;
    border-right: 1px solid #ddd;
}

.prompt {
    margin-left: 5px;
    color: #f0f0f0;
    font-size: 12.4px;
    line-height: 26px;
    width: 1638px;
}

.prompt b {
    color: #35a835;
    font-weight: bold;
}

.status-rest {
    flex: 1;
    background: #efefef;
}

/* main */
.workspace {
    height: 915px;
    display: flex;
    background: #000;
}

.sidebar {
    width: 34px;
    padding: 310px 0 0 2px;
    display: flex;
    flex-direction: column;
    gap: 1px;
    background: #000;
    border-left: 1px solid #777;
}

.side-tool {
    width: 29px;
    height: 25px;
    background: linear-gradient(90deg, #0b4a8c, #0a2f60);
    display: flex;
    align-items: center;
    justify-content: center;
}

.side-tool svg {
    width: 29px;
    height: 23px;
}

.side-tool.dark {
    background: #000;
    border: 1px solid #eee;
}

.side-a {
    color: #fff;
    font-family: "Liberation Serif", serif;
    font-weight: bold;
    font-size: 20px;
    line-height: 24px;
}

.axis {
    fill: #fff;
    font-size: 7px;
    font-family: "Liberation Sans", sans-serif;
}

/* drawing */
.canvas {
    width: 1742px;
    position: relative;
    background: #000;
}

.drawing {
    position: absolute;
    left: 0;
    top: 0;
    width: 1742px;
    height: 915px;
}

.cad-label {
    fill: #e4e4e4;
    stroke: #000;
    stroke-width: 1.7px;
    paint-order: fill stroke;
    font-size: 56px;
    letter-spacing: 20px;
}

.big-title {
    position: absolute;
    left: 0;
    top: 277px;
    width: 1742px;
    padding-left: 106px;
    text-align: center;
    color: #ffd800;
    -webkit-text-stroke: 6px #ffd800;
    font-family: "Liberation Sans", "Noto Sans CJK SC", sans-serif;
    font-size: 166px;
    font-weight: 400;
    line-height: 166px;
    white-space: nowrap;
}

.big-line {
    height: 166px;
}

.line-first {
    padding-left: 6px;
    letter-spacing: 2.5px;
}

.line-second {
    padding-top: 3px;
}

/* video player */
.player {
    position: absolute;
    left: 637px;
    top: 868px;
    width: 576px;
    height: 45px;
    background: #0a0a0d;
    border-radius: 6px;
    display: flex;
    align-items: center;
    padding-left: 18px;
    font-size: 11px;
    font-family: "Liberation Sans", sans-serif;
}

.play-icon {
    width: 9px;
    height: 13px;
    margin-right: 16px;
}

.time-now {
    color: #00a8c0;
    width: 75px;
}

.time-all {
    color: #aaa;
    width: 68px;
}

.track {
    width: 293px;
    height: 2px;
    background: #2a2a2a;
    position: relative;
}

.track i {
    position: absolute;
    left: -3px;
    top: -3px;
    width: 8px;
    height: 8px;
    border-radius: 50%;
    background: #1bc8d8;
    border: 2px solid #e8e8e8;
}

.quality {
    color: #bbb;
    font-family: "Noto Sans CJK SC", sans-serif;
    font-size: 10px;
    margin-left: 11px;
    width: 54px;
}

.quality small {
    font-size: 7px;
}

.shrink-icon {
    width: 14px;
    height: 14px;
    margin-left: 2px;
}

/* right panel */
.panel {
    width: 144px;
    margin-top: -30px;
    background: #000;
    border-left: 2px solid #eee;
    overflow: hidden;
    display: flex;
    flex-direction: column;
    position: relative;
}

.panel-head {
    height: 61px;
    background: linear-gradient(90deg, #000, #777 50%, #000);
    display: flex;
    flex-direction: column;
    align-items: flex-start;
    padding-top: 5px;
    flex-shrink: 0;
}

.mini-row {
    display: flex;
    gap: 12px;
    margin-left: 15px;
}

.mini {
    width: 20px;
    height: 20px;
    border: 1px solid #d8b070;
    background: #444;
}

.mini svg {
    width: 18px;
    height: 18px;
    display: block;
}

.mini-wire {
    width: 96px;
    height: 5px;
    margin-left: 25px;
    border: 1px solid #c8a050;
    border-top: none;
}

.bullet {
    width: 86px;
    height: 12px;
    margin: 10px 0 0 27px;
}

.site-band {
    height: 23px;
    background: linear-gradient(90deg, #1f62e8, #0a1a55 30%, #0a1a55 70%, #1f62e8);
    border-top: 1px solid #c8a050;
    border-bottom: 1px solid #c8a050;
    color: #f0a838;
    font-family: "Liberation Mono", monospace;
    font-size: 10.5px;
    letter-spacing: 0.2px;
    text-align: center;
    line-height: 22px;
    flex-shrink: 0;
}

.tool-group {
    display: grid;
    grid-template-columns: repeat(4, 34px);
    grid-auto-rows: 34px;
    gap: 2px;
    padding: 0 0 2px 2px;
    margin-bottom: 10px;
    flex-shrink: 0;
    position: relative;
}

.tool-group:after {
    content: '';
    position: absolute;
    left: 0;
    right: 0;
    bottom: -10px;
    height: 12px;
    background: linear-gradient(90deg, #3c3c3c, #000 50%, #3c3c3c);
}

.site-band + .tool-group {
    padding-top: 3px;
}

.tool-group:last-of-type:after {
    display: none;
}

.tile {
    width: 34px;
    height: 34px;
    background: #e3bc7d;
}

.tile.gray {
    background: #7a7a7a;
}

.tile svg {
    width: 34px;
    height: 34px;
    display: block;
}

.et-text {
    fill: #fff;
    font-size: 8px;
    text-anchor: middle;
    font-family: "Liberation Sans", sans-serif;
}

.abc {
    display: block;
    color: #f8c010;
    font-family: "Liberation Serif", serif;
    font-weight: bold;
    font-size: 17px;
    line-height: 30px;
    transform: rotate(38deg);
    white-space: nowrap;
}

.unit-row {
    display: flex;
    height: 32px;
    margin-top: -8px;
    flex-shrink: 0;
}

.unit-num {
    width: 43px;
    margin-left: 2px;
    background: #8e8e8e;
    border: 1px solid;
    border-color: #eee #555 #555 #eee;
    color: #18c8e8;
    font-weight: bold;
    font-size: 15px;
    text-align: center;
    line-height: 30px;
}

.unit-cm {
    width: 67px;
    background: #171717;
    border-bottom: 1px solid #666;
    border-right: 1px solid #444;
    color: #f0a818;
    font-family: "Liberation Sans", sans-serif;
    font-weight: bold;
    font-size: 20px;
    text-align: center;
    line-height: 28px;
}

.unit-calc {
    width: 24px;
    height: 30px;
    margin-left: 6px;
}

.tan-strip {
    height: 27px;
    background: #e3bf80;
    flex-shrink: 0;
}

.thumb {
    width: 142px;
    height: 111px;
    display: block;
    background: #333;
    flex-shrink: 0;
}

.coords {
    height: 42px;
    background: #e3bf80;
    padding: 1px 0 0 9px;
    color: #222;
    font-family: "Liberation Mono", monospace;
    font-size: 12px;
    line-height: 18px;
    flex-shrink: 0;
}

.coords span {
    display: inline-block;
    width: 25px;
}

.tan-box {
    height: 59px;
    margin-left: 1px;
    background: #e3bf80;
    border: 2px solid;
    border-color: #8a8a8a #f0e8d8 #f8f8f8 #8a8a8a;
    flex-shrink: 0;
}

.panel-foot {
    flex: 1;
    margin-top: 1px;
    background: linear-gradient(90deg, #555, #000 50%, #555);
}

/* layers */
.layerbar {
    height: 24px;
    background: #f2f2f2;
    border-top: 2px solid #eee;
    border-bottom: 2px solid #e4e4e4;
    display: flex;
    align-items: stretch;
    color: #222;
    padding-left: 1px;
    padding-top: 1px;
}

.lbtn {
    background: #f0f0f0;
    border: 1px solid #777;
    border-top-color: #fff;
    border-left-color: #fff;
    text-align: center;
    line-height: 17px;
    flex-shrink: 0;
}

.lbtn-s {
    width: 18px;
    font-family: "Liberation Sans", sans-serif;
}

.lbtn-layer {
    width: 86px;
    background: #fff;
}

.lbtn-arrow {
    width: 16px;
    font-size: 11px;
}

.lbtn-slider {
    width: 16px;
    background: #f7f7f7;
}

.lbtn-all {
    width: 31px;
}

.lbtn-lr {
    width: 29px;
    font-family: "Liberation Sans", sans-serif;
}

.cells {
    width: 1489px;
    display: grid;
    grid-template-columns: repeat(31, 1fr);
    gap: 2px;
    padding-left: 1px;
    background: #f4f4f4;
}

.cell {
    background: #3c3c3c;
    color: #1c1c1c;
    text-align: center;
    line-height: 18px;
    font-family: "Liberation Sans", sans-serif;
    font-size: 12px;
}

.cell.on {
    background: #fff;
    border: 2px solid #5de0e8;
    color: #3848d8;
    line-height: 14px;
}

/* windows taskbar */
.taskbar {
    flex: 1;
    background: #d4d4d4;
    display: flex;
    align-items: stretch;
    border-top: 1px solid #eee;
}

.win-logo {
    width: 18px;
    height: 18px;
    margin: 12px 0 0 15px;
}

.task-view {
    width: 17px;
    height: 24px;
    margin: 9px 18px 0 31px;
}

.task-item {
    width: 40px;
    margin-right: 9px;
    border-bottom: 2px solid #0a78d4;
    display: flex;
    align-items: center;
    justify-content: center;
}

.task-item svg {
    width: 26px;
    height: 28px;
}

.task-item.active {
    width: 48px;
    margin-right: 5px;
    background: #ececec;
}

.tray {
    margin-left: auto;
    display: flex;
    align-items: center;
    gap: 6px;
    padding-right: 12px;
}

.tray-up {
    width: 11px;
    height: 8px;
    margin-right: 4px;
}

.tray-icon {
    width: 18px;
    height: 18px;
}

.tray-s {
    margin-left: 2px;
}

.tray-ime {
    color: #333;
    font-size: 13px;
    width: 18px;
    text-align: center;
}

.clock {
    width: 68px;
    margin-left: 8px;
    text-align: center;
    color: #222;
    font-size: 12px;
    line-height: 20px;
}

.notify {
    width: 24px;
    height: 30px;
    margin-left: 12px;
    position: relative;
}

.notify svg {
    width: 17px;
    height: 17px;
}

.notify span {
    position: absolute;
    right: 0;
    bottom: -2px;
    width: 17px;
    height: 17px;
    border: 1px solid #444;
    border-radius: 50%;
    background: #d4d4d4;
    text-align: center;
    font-weight: bold;
    line-height: 15px;
    color: #222;
}
```
